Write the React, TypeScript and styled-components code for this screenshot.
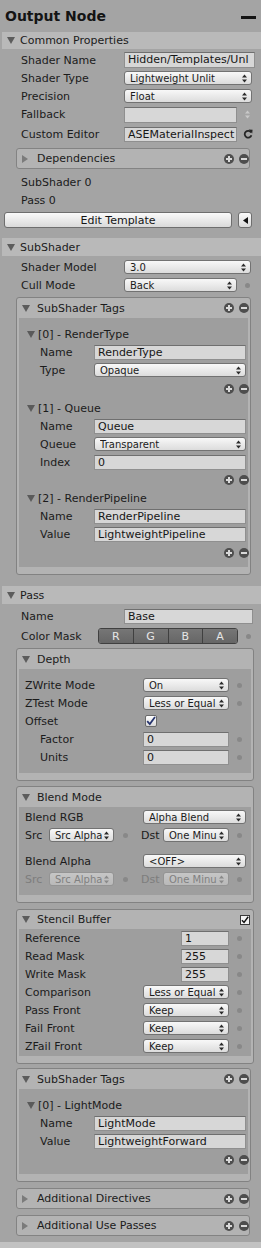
import React from "react";
import styled, { createGlobalStyle, css } from "styled-components";

const GlobalStyle = createGlobalStyle`
  html, body { margin: 0; padding: 0; background: #a4a4a4; }
  body { font-family: "DejaVu Sans", Verdana, sans-serif; font-size: 11px; color: #1b1b1b; }
  * { box-sizing: border-box; }
`;

const Panel = styled.div`
  width: 261px;
  height: 1248px;
  display: flex;
  flex-direction: column;
  background: #a4a4a4;
  overflow: hidden;
`;

const TitleBar = styled.div`
  height: 32px;
  flex: none;
  display: flex;
  align-items: center;
  justify-content: space-between;
  padding: 0 5px;
`;

const Title = styled.div`
  font-weight: bold;
  font-size: 14px;
  color: #141414;
`;

const MinBar = styled.div`
  width: 15px;
  height: 3px;
  background: #141414;
  margin-top: 3px;
`;

const SectionHeader = styled.div<{ $mt?: number; $h?: number }>`
  flex: none;
  height: ${(p) => p.$h ?? 18}px;
  margin: ${(p) => p.$mt ?? 0}px 0 0 2px;
  background: #b9b9b9;
  display: flex;
  align-items: center;
  padding-left: 5px;
  gap: 5px;
`;

const Caret = styled.span<{ $open?: boolean; $tone?: string; $size?: number }>`
  width: 0;
  height: 0;
  flex: none;
  ${(p) =>
    p.$open
      ? css`
          border-left: 4px solid transparent;
          border-right: 4px solid transparent;
          border-top: ${p.$size ?? 7}px solid ${p.$tone || "#5c5c5c"};
        `
      : css`
          border-top: 4px solid transparent;
          border-bottom: 4px solid transparent;
          border-left: ${p.$size ?? 6}px solid ${p.$tone || "#7b7b7b"};
        `}
`;

const Row = styled.div<{ $h?: number; $mt?: number; $pl?: number }>`
  display: flex;
  align-items: center;
  flex: none;
  height: ${(p) => p.$h ?? 18}px;
  margin-top: ${(p) => p.$mt ?? 0}px;
  padding-left: ${(p) => p.$pl ?? 0}px;
  white-space: nowrap;
`;

const Label = styled.span<{ $w: number; $dim?: boolean; $ml?: number }>`
  width: ${(p) => p.$w}px;
  flex: none;
  margin-left: ${(p) => p.$ml ?? 0}px;
  white-space: nowrap;
  color: ${(p) => (p.$dim ? "#7d7d7d" : "#1b1b1b")};
`;

const TextField = styled.div<{ $w: number; $h?: number }>`
  width: ${(p) => p.$w}px;
  height: ${(p) => p.$h ?? 15}px;
  flex: none;
  background: #d7d7d7;
  border: 1px solid #8f8f8f;
  border-top-color: #6f6f6f;
  padding-left: 3px;
  line-height: ${(p) => (p.$h ?? 15) - 2}px;
  white-space: nowrap;
  overflow: hidden;
  color: #161616;
`;

const Popup = styled.div<{ $w: number; $disabled?: boolean }>`
  width: ${(p) => p.$w}px;
  height: 14px;
  flex: none;
  display: flex;
  align-items: center;
  gap: 2px;
  padding: 0 4px 0 5px;
  border: 1px solid ${(p) => (p.$disabled ? "#949494" : "#727272")};
  border-radius: 3px;
  background: ${(p) =>
    p.$disabled ? "linear-gradient(#c6c6c6, #b9b9b9)" : "linear-gradient(#f8f8f8, #dcdcdc)"};
  font-size: 10px;
  color: ${(p) => (p.$disabled ? "#808080" : "#1b1b1b")};
  white-space: nowrap;
`;

const PopupText = styled.span`
  flex: 1;
  min-width: 0;
  overflow: hidden;
`;

const Dot = styled.span<{ $ml?: number }>`
  width: 5px;
  height: 5px;
  border-radius: 50%;
  background: #888888;
  flex: none;
  margin-left: ${(p) => p.$ml ?? 8}px;
`;

const Box = styled.div<{ $w: number; $mt?: number }>`
  flex: none;
  margin: ${(p) => p.$mt ?? 0}px 0 0 16px;
  width: ${(p) => p.$w}px;
  border: 1px solid #828282;
  border-radius: 3px;
  background: #b3b3b3;
  padding: 0 2px 7px;
  display: flex;
  flex-direction: column;
`;

const BoxHeader = styled.div<{ $h?: number }>`
  height: ${(p) => p.$h ?? 20}px;
  flex: none;
  display: flex;
  align-items: center;
  padding-left: 3px;
  gap: 7px;
`;

const BoxBody = styled.div<{ $pt?: number; $pb?: number }>`
  background: #9e9e9e;
  display: flex;
  flex-direction: column;
  padding-top: ${(p) => p.$pt ?? 0}px;
  padding-bottom: ${(p) => p.$pb ?? 0}px;
`;

const CollapsedBox = styled.div<{ $w: number; $mt?: number }>`
  flex: none;
  margin: ${(p) => p.$mt ?? 0}px 0 0 16px;
  width: ${(p) => p.$w}px;
  height: 21px;
  border: 1px solid #838383;
  border-radius: 3px;
  background: #b3b3b3;
  display: flex;
  align-items: center;
  padding-left: 5px;
  gap: 9px;
`;

const Spacer = styled.span`
  flex: 1;
`;

const ItemTitle = styled.span`
  margin-left: 3px;
`;

const MaskGroup = styled.div`
  display: flex;
  width: 140px;
  height: 16px;
  flex: none;
  border: 1px solid #404040;
  border-radius: 3px;
  overflow: hidden;
`;

const MaskBtn = styled.div`
  flex: 1;
  display: flex;
  align-items: center;
  justify-content: center;
  background: linear-gradient(#767676, #666666);
  color: #e6e6e6;
  & + & {
    border-left: 1px solid #404040;
  }
`;

const Button = styled.div<{ $w: number }>`
  width: ${(p) => p.$w}px;
  height: 16px;
  flex: none;
  display: flex;
  align-items: center;
  justify-content: center;
  border: 1px solid #6e6e6e;
  border-radius: 3px;
  background: linear-gradient(#fafafa, #dadada);
  color: #141414;
`;

const CheckBox = styled.div<{ $ml?: number; $plain?: boolean }>`
  width: ${(p) => (p.$plain ? 10 : 12)}px;
  height: ${(p) => (p.$plain ? 10 : 12)}px;
  flex: none;
  margin-left: ${(p) => p.$ml ?? 0}px;
  border: 1px solid ${(p) => (p.$plain ? "#3a3a3a" : "#6a6a6a")};
  border-radius: ${(p) => (p.$plain ? 0 : 2)}px;
  background: ${(p) => (p.$plain ? "#f4f4f4" : "linear-gradient(#ffffff, #d9d9d9)")};
  display: flex;
  align-items: center;
  justify-content: center;
`;

const IconSlot = styled.span<{ $ml?: number; $mr?: number }>`
  display: inline-flex;
  align-items: center;
  flex: none;
  margin-left: ${(p) => p.$ml ?? 0}px;
  margin-right: ${(p) => p.$mr ?? 0}px;
`;

const Footer = styled.div`
  flex: 1;
  margin-top: 6px;
  background: #c2c2c2;
`;

const Arrows = ({ color = "#2a2a2a" }: { color?: string }) => (
  <svg width="5" height="9" viewBox="0 0 5 9">
    <path d="M0 3.6 L2.5 0.6 L5 3.6Z M0 5.4 L2.5 8.4 L5 5.4Z" fill={color} />
  </svg>
);

const PlusMinus = ({ mr = 0 }: { mr?: number }) => (
  <IconSlot $ml={0} $mr={mr}>
    <svg width="25" height="10" viewBox="0 0 25 10">
      <circle cx="5" cy="5" r="5" fill="#4e4e4e" />
      <rect x="2" y="4" width="6" height="2" fill="#d9d9d9" />
      <rect x="4" y="2" width="2" height="6" fill="#d9d9d9" />
      <circle cx="20" cy="5" r="5" fill="#4e4e4e" />
      <rect x="17" y="4" width="6" height="2" fill="#d9d9d9" />
    </svg>
  </IconSlot>
);

const Refresh = () => (
  <svg width="10" height="10" viewBox="0 0 10 10">
    <path d="M8 3.4 A3.4 3.4 0 1 0 8.4 6.2" fill="none" stroke="#262626" strokeWidth="1.8" />
    <path d="M5.6 0.6 L9.6 0.8 L9.2 4.6 Z" fill="#262626" />
  </svg>
);

const Check = ({ color }: { color: string }) => (
  <svg width="10" height="10" viewBox="0 0 10 10">
    <path d="M1.2 5.2 L3.8 8 L9 1" fill="none" stroke={color} strokeWidth="1.8" />
  </svg>
);

const PopupField = ({ w, text, disabled }: { w: number; text: string; disabled?: boolean }) => (
  <Popup $w={w} $disabled={disabled}>
    <PopupText>{text}</PopupText>
    <Arrows color={disabled ? "#8a8a8a" : "#2a2a2a"} />
  </Popup>
);

const TagItem = ({ index, name, children }: { index: number; name: string; children: React.ReactNode }) => (
  <>
    <Row $pl={8}>
      <Caret $open $tone="#5a5a5a" $size={7} />
      <ItemTitle>{`[${index}] - ${name}`}</ItemTitle>
    </Row>
    {children}
  </>
);

const PMRow = ({ h = 18 }: { h?: number }) => (
  <Row $h={h}>
    <Spacer />
    <PlusMinus mr={-1} />
  </Row>
);

export default function App() {
  return (
    <Panel>
      <GlobalStyle />
      <TitleBar>
        <Title>Output Node</Title>
        <MinBar />
      </TitleBar>

      <SectionHeader $h={17}>
        <Caret $open />
        <span>Common Properties</span>
      </SectionHeader>
      <Row $pl={21} $mt={2}>
        <Label $w={103}>Shader Name</Label>
        <TextField $w={131} $h={16}>Hidden/Templates/Unl</TextField>
      </Row>
      <Row $pl={21}>
        <Label $w={103}>Shader Type</Label>
        <PopupField w={128} text="Lightweight Unlit" />
      </Row>
      <Row $pl={21}>
        <Label $w={103}>Precision</Label>
        <PopupField w={128} text="Float" />
      </Row>
      <Row $pl={21} $h={19}>
        <Label $w={103}>Fallback</Label>
        <TextField $w={113} $h={16} />
        <IconSlot $ml={8}>
          <Arrows color="#c9c9c9" />
        </IconSlot>
      </Row>
      <Row $pl={21} $h={20}>
        <Label $w={103}>Custom Editor</Label>
        <TextField $w={113}>ASEMaterialInspect</TextField>
        <IconSlot $ml={6}>
          <Refresh />
        </IconSlot>
      </Row>
      <CollapsedBox $w={234} $mt={4}>
        <Caret />
        <span>Dependencies</span>
        <Spacer />
        <PlusMinus mr={0} />
      </CollapsedBox>
      <Row $pl={21} $mt={4}>
        <span>SubShader 0</span>
      </Row>
      <Row $pl={21}>
        <span>Pass 0</span>
      </Row>
      <Row $pl={4} $mt={3} $h={16}>
        <Button $w={228}>Edit Template</Button>
        <IconSlot $ml={6}>
          <Button $w={14}>
            <svg width="5" height="7" viewBox="0 0 5 7">
              <path d="M5 0 L0 3.5 L5 7Z" fill="#111" />
            </svg>
          </Button>
        </IconSlot>
      </Row>

      <SectionHeader $mt={10}>
        <Caret $open />
        <span>SubShader</span>
      </SectionHeader>
      <Row $pl={21} $mt={2}>
        <Label $w={103}>Shader Model</Label>
        <PopupField w={127} text="3.0" />
      </Row>
      <Row $pl={21}>
        <Label $w={103}>Cull Mode</Label>
        <PopupField w={113} text="Back" />
        <Dot $ml={8} />
      </Row>
      <Box $w={235} $mt={3}>
        <BoxHeader>
          <Caret $open />
          <span>SubShader Tags</span>
          <Spacer />
          <PlusMinus mr={-1} />
        </BoxHeader>
        <BoxBody $pt={7} $pb={4}>
          <TagItem index={0} name="RenderType">
            <Row $pl={21}>
              <Label $w={54}>Name</Label>
              <TextField $w={152}>RenderType</TextField>
            </Row>
            <Row $pl={21}>
              <Label $w={54}>Type</Label>
              <PopupField w={152} text="Opaque" />
            </Row>
          </TagItem>
          <PMRow h={20} />
          <TagItem index={1} name="Queue">
            <Row $pl={21}>
              <Label $w={54}>Name</Label>
              <TextField $w={152}>Queue</TextField>
            </Row>
            <Row $pl={21}>
              <Label $w={54}>Queue</Label>
              <PopupField w={152} text="Transparent" />
            </Row>
            <Row $pl={21}>
              <Label $w={54}>Index</Label>
              <TextField $w={152}>0</TextField>
            </Row>
          </TagItem>
          <PMRow />
          <TagItem index={2} name="RenderPipeline">
            <Row $pl={21}>
              <Label $w={54}>Name</Label>
              <TextField $w={152}>RenderPipeline</TextField>
            </Row>
            <Row $pl={21}>
              <Label $w={54}>Value</Label>
              <TextField $w={152}>LightweightPipeline</TextField>
            </Row>
          </TagItem>
          <PMRow h={20} />
        </BoxBody>
      </Box>

      <SectionHeader $mt={11}>
        <Caret $open />
        <span>Pass</span>
      </SectionHeader>
      <Row $pl={21} $mt={3}>
        <Label $w={103}>Name</Label>
        <TextField $w={129}>Base</TextField>
      </Row>
      <Row $pl={21} $mt={2}>
        <Label $w={77}>Color Mask</Label>
        <MaskGroup>
          <MaskBtn>R</MaskBtn>
          <MaskBtn>G</MaskBtn>
          <MaskBtn>B</MaskBtn>
          <MaskBtn>A</MaskBtn>
        </MaskGroup>
        <Dot $ml={8} />
      </Row>

      <Box $w={238} $mt={3}>
        <BoxHeader>
          <Caret $open />
          <span>Depth</span>
        </BoxHeader>
        <BoxBody $pt={7} $pb={7}>
          <Row $pl={6}>
            <Label $w={118}>ZWrite Mode</Label>
            <PopupField w={86} text="On" />
            <Dot />
          </Row>
          <Row $pl={6}>
            <Label $w={118}>ZTest Mode</Label>
            <PopupField w={86} text="Less or Equal" />
            <Dot />
          </Row>
          <Row $pl={6}>
            <Label $w={120}>Offset</Label>
            <CheckBox>
              <Check color="#26346e" />
            </CheckBox>
          </Row>
          <Row $pl={21}>
            <Label $w={103}>Factor</Label>
            <TextField $w={86}>0</TextField>
            <Dot />
          </Row>
          <Row $pl={21}>
            <Label $w={103}>Units</Label>
            <TextField $w={86}>0</TextField>
            <Dot />
          </Row>
        </BoxBody>
      </Box>

      <Box $w={238} $mt={5}>
        <BoxHeader>
          <Caret $open />
          <span>Blend Mode</span>
        </BoxHeader>
        <BoxBody $pt={1} $pb={7}>
          <Row $pl={6}>
            <Label $w={118}>Blend RGB</Label>
            <PopupField w={103} text="Alpha Blend" />
          </Row>
          <Row $pl={6}>
            <Label $w={24}>Src</Label>
            <PopupField w={65} text="Src Alpha" />
            <Dot $ml={9} />
            <Label $w={22} $ml={13}>Dst</Label>
            <PopupField w={66} text="One Minu" />
            <Dot />
          </Row>
          <Row $pl={6} $mt={8}>
            <Label $w={118}>Blend Alpha</Label>
            <PopupField w={103} text="<OFF>" />
          </Row>
          <Row $pl={6}>
            <Label $w={24} $dim>Src</Label>
            <PopupField w={65} text="Src Alpha" disabled />
            <Dot $ml={9} />
            <Label $w={22} $dim $ml={13}>Dst</Label>
            <PopupField w={66} text="One Minu" disabled />
            <Dot />
          </Row>
        </BoxBody>
      </Box>

      <Box $w={238} $mt={6}>
        <BoxHeader $h={19}>
          <Caret $open />
          <span>Stencil Buffer</span>
          <Spacer />
          <IconSlot $mr={1}>
            <CheckBox $plain>
              <Check color="#111111" />
            </CheckBox>
          </IconSlot>
        </BoxHeader>
        <BoxBody $pt={0} $pb={1}>
          <Row $pl={6}>
            <Label $w={156}>Reference</Label>
            <TextField $w={48}>1</TextField>
            <Dot />
          </Row>
          <Row $pl={6}>
            <Label $w={156}>Read Mask</Label>
            <TextField $w={48}>255</TextField>
            <Dot />
          </Row>
          <Row $pl={6}>
            <Label $w={156}>Write Mask</Label>
            <TextField $w={48}>255</TextField>
            <Dot />
          </Row>
          <Row $pl={6}>
            <Label $w={118}>Comparison</Label>
            <PopupField w={86} text="Less or Equal" />
            <Dot />
          </Row>
          <Row $pl={6}>
            <Label $w={118}>Pass Front</Label>
            <PopupField w={86} text="Keep" />
            <Dot />
          </Row>
          <Row $pl={6}>
            <Label $w={118}>Fail Front</Label>
            <PopupField w={86} text="Keep" />
            <Dot />
          </Row>
          <Row $pl={6}>
            <Label $w={118}>ZFail Front</Label>
            <PopupField w={86} text="Keep" />
            <Dot />
          </Row>
        </BoxBody>
      </Box>

      <Box $w={235} $mt={4}>
        <BoxHeader>
          <Caret $open />
          <span>SubShader Tags</span>
          <Spacer />
          <PlusMinus mr={-1} />
        </BoxHeader>
        <BoxBody $pt={7} $pb={4}>
          <TagItem index={0} name="LightMode">
            <Row $pl={21}>
              <Label $w={54}>Name</Label>
              <TextField $w={152}>LightMode</TextField>
            </Row>
            <Row $pl={21}>
              <Label $w={54}>Value</Label>
              <TextField $w={152}>LightweightForward</TextField>
            </Row>
          </TagItem>
          <PMRow h={20} />
        </BoxBody>
      </Box>

      <CollapsedBox $w={234} $mt={6}>
        <Caret />
        <span>Additional Directives</span>
        <Spacer />
        <PlusMinus mr={0} />
      </CollapsedBox>
      <CollapsedBox $w={234} $mt={6}>
        <Caret />
        <span>Additional Use Passes</span>
        <Spacer />
        <PlusMinus mr={0} />
      </CollapsedBox>
      <Footer />
    </Panel>
  );
}
